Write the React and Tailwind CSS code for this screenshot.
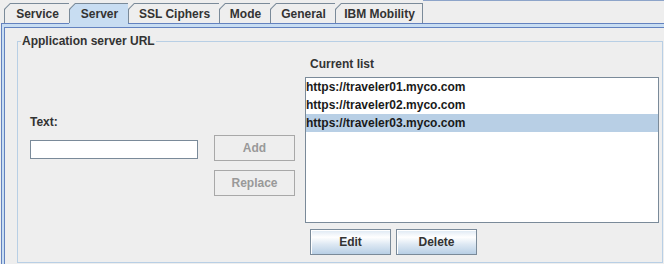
import React from "react";

function Tab({ label, w, selected, last }) {
  return (
    <div className="flex flex-col shrink-0 pt-[3px]" style={{ width: w }}>
      <div
        className={
          last
            ? "h-[20px] bg-[#7a8a99] pl-[1px] pt-[1px] pr-[1px] flex [clip-path:polygon(6px_0,100%_0,100%_100%,0_100%,0_6px)]"
            : "h-[20px] bg-[#7a8a99] pl-[1px] pt-[1px] flex [clip-path:polygon(6px_0,100%_0,100%_100%,0_100%,0_6px)]"
        }
      >
        <div
          className={
            selected
              ? "flex-1 bg-[#c8ddf2] flex items-center justify-center leading-[14px] text-[#333333] [clip-path:polygon(5.4px_0,100%_0,100%_100%,0_100%,0_5.4px)]"
              : "flex-1 bg-[#eeeeee] flex items-center justify-center leading-[14px] text-[#333333] [clip-path:polygon(5.4px_0,100%_0,100%_100%,0_100%,0_5.4px)]"
          }
        >
          <span className="ml-[1px]">{label}</span>
        </div>
      </div>
      <div className={selected ? "h-[1px] bg-[#c8ddf2]" : "h-[1px] bg-[#6382bf]"} />
    </div>
  );
}

function OceanButton({ children }) {
  return (
    <div className="w-[81px] h-[26px] border border-[#7a8a99] bg-[linear-gradient(#dde8f3_0%,#ffffff_30%,#dde8f3_60%,#b8cfe5_100%)] shadow-[inset_1px_1px_0_#ffffff] flex items-center justify-center text-[#333333] leading-[14px]">
      {children}
    </div>
  );
}

function DisabledButton({ children }) {
  return (
    <div className="w-[81px] h-[26px] border border-[#a8a8a8] bg-[#eeeeee] flex items-center justify-center text-[#999999] leading-[14px]">
      {children}
    </div>
  );
}

export default function App() {
  const items = [
    "https://traveler01.myco.com",
    "https://traveler02.myco.com",
    "https://traveler03.myco.com",
  ];
  return (
    <div className="w-[664px] h-[264px] bg-[#eeeeee] overflow-hidden font-['Liberation_Sans',Arial,sans-serif] font-bold text-[12px] text-[#333333] flex flex-col">
      <div className="flex h-[24px] shrink-0">
        <div className="w-[4px] flex flex-col justify-end">
          <div className="h-[1px] bg-[#6382bf] ml-[1px]" />
        </div>
        <Tab label="Service" w={65} />
        <Tab label="Server" w={59} selected />
        <Tab label="SSL Ciphers" w={91} />
        <Tab label="Mode" w={51} />
        <Tab label="General" w={65} />
        <Tab label="IBM Mobility" w={88} last />
        <div className="flex-1 flex flex-col justify-between">
          <div className="h-[1px] bg-[#8da4c9]" />
          <div className="h-[1px] bg-[#6382bf]" />
        </div>
      </div>
      <div className="flex-1 flex flex-col ml-[1px] border-l border-[#6382bf] bg-[#c8ddf2] pt-[3px] pl-[2px]">
        <div className="flex-1 bg-[#eeeeee] border-t border-l border-[#6382bf] pl-[12px] pt-[13px]">
          <div className="w-[646px] h-[222px] border border-[#b8cfe5]">
            <div className="-mt-[8px] ml-[3px] px-[1px] bg-[#eeeeee] w-fit leading-[14px] text-[#333333]">
              Application server URL
            </div>
            <div className="grid grid-cols-[287px_354px]">
              <div className="flex items-start pl-[12px]">
                <div className="flex flex-col pt-[67px]">
                  <div className="leading-[14px]">Text:</div>
                  <div className="mt-[11px] w-[168px] h-[19px] border border-[#7a8a99] bg-white" />
                </div>
                <div className="flex flex-col ml-[16px] pt-[87px] gap-[9px]">
                  <DisabledButton>Add</DisabledButton>
                  <DisabledButton>Replace</DisabledButton>
                </div>
              </div>
              <div className="flex flex-col">
                <div className="mt-[9px] pl-[5px] leading-[14px]">Current list</div>
                <div className="mt-[6px] w-[354px] h-[146px] border border-[#7a8a99] bg-white flex flex-col">
                  {items.map((t, i) => (
                    <div
                      key={t}
                      className={
                        i === 2
                          ? "h-[18px] leading-[18px] bg-[#b8cfe5] text-[#1a1a1a]"
                          : "h-[18px] leading-[18px] bg-white text-[#1a1a1a]"
                      }
                    >
                      {t}
                    </div>
                  ))}
                </div>
                <div className="flex gap-[5px] mt-[6px] pl-[5px]">
                  <OceanButton>Edit</OceanButton>
                  <OceanButton>Delete</OceanButton>
                </div>
              </div>
            </div>
          </div>
        </div>
      </div>
    </div>
  );
}
